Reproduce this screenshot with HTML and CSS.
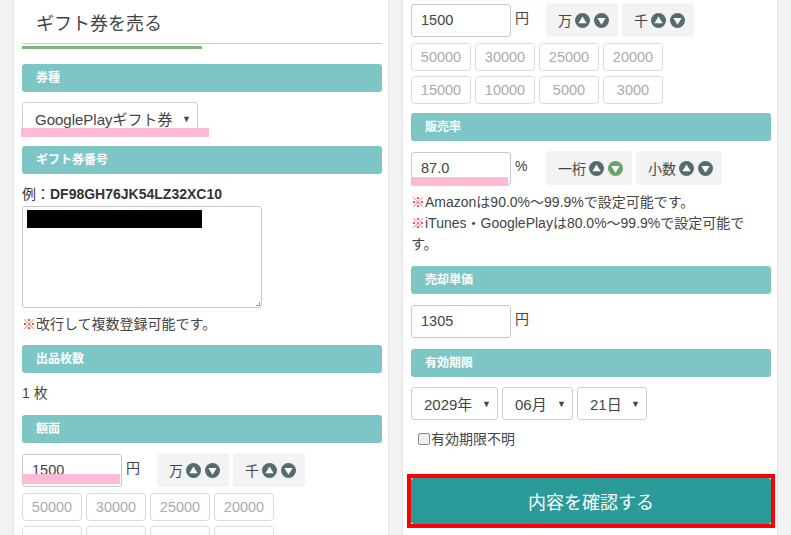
FILE: index.html
```html
<!DOCTYPE html>
<html lang="ja">
<head>
<meta charset="utf-8">
<title>ギフト券を売る</title>
<link rel="stylesheet" href="styles.css">
</head>
<body>
<div class="page">
  <section class="panel panel-left">
    <h1 class="title">ギフト券を売る</h1>
    <div class="title-bar"></div>

    <div class="head head-first">券種</div>
    <div class="mark mark-select">
      <div class="select select-type"><span>GooglePlayギフト券</span><span class="arrow">▼</span></div>
    </div>

    <div class="head head-gap">ギフト券番号</div>
    <p class="example">例：<b>DF98GH76JK54LZ32XC10</b></p>
    <div class="textarea"><div class="redact"></div><span class="grip"></span></div>
    <p class="note-left"><span class="red">※</span>改行して複数登録可能です。</p>

    <div class="head head-gap2">出品枚数</div>
    <p class="count">1 枚</p>

    <div class="head head-gap3">額面</div>
    <div class="input-row row-left">
      <div class="mark mark-input"><div class="input">1500</div></div>
      <span class="unit">円</span>
      <div class="spin">万<svg class="ic" viewBox="0 0 16 16"><circle cx="8" cy="8" r="8" fill="#546c70"/><polygon points="8,3.6 12.4,10.8 3.6,10.8" fill="#fff"/></svg><svg class="ic" viewBox="0 0 16 16"><circle cx="8" cy="8" r="8" fill="#546c70"/><polygon points="3.6,5.2 12.4,5.2 8,12.4" fill="#fff"/></svg></div>
      <div class="spin">千<svg class="ic" viewBox="0 0 16 16"><circle cx="8" cy="8" r="8" fill="#546c70"/><polygon points="8,3.6 12.4,10.8 3.6,10.8" fill="#fff"/></svg><svg class="ic" viewBox="0 0 16 16"><circle cx="8" cy="8" r="8" fill="#546c70"/><polygon points="3.6,5.2 12.4,5.2 8,12.4" fill="#fff"/></svg></div>
    </div>
    <div class="presets">
      <span class="preset">50000</span><span class="preset">30000</span><span class="preset">25000</span><span class="preset">20000</span>
      <span class="preset">15000</span><span class="preset">10000</span><span class="preset">5000</span><span class="preset">3000</span>
    </div>
  </section>

  <section class="panel panel-right">
    <div class="input-row row-top">
      <div class="input">1500</div>
      <span class="unit">円</span>
      <div class="spin">万<svg class="ic" viewBox="0 0 16 16"><circle cx="8" cy="8" r="8" fill="#546c70"/><polygon points="8,3.6 12.4,10.8 3.6,10.8" fill="#fff"/></svg><svg class="ic" viewBox="0 0 16 16"><circle cx="8" cy="8" r="8" fill="#546c70"/><polygon points="3.6,5.2 12.4,5.2 8,12.4" fill="#fff"/></svg></div>
      <div class="spin">千<svg class="ic" viewBox="0 0 16 16"><circle cx="8" cy="8" r="8" fill="#546c70"/><polygon points="8,3.6 12.4,10.8 3.6,10.8" fill="#fff"/></svg><svg class="ic" viewBox="0 0 16 16"><circle cx="8" cy="8" r="8" fill="#546c70"/><polygon points="3.6,5.2 12.4,5.2 8,12.4" fill="#fff"/></svg></div>
    </div>
    <div class="presets">
      <span class="preset">50000</span><span class="preset">30000</span><span class="preset">25000</span><span class="preset">20000</span>
      <span class="preset">15000</span><span class="preset">10000</span><span class="preset">5000</span><span class="preset">3000</span>
    </div>

    <div class="head head-r1">販売率</div>
    <div class="input-row row-rate">
      <div class="mark mark-rate"><div class="input">87.0</div></div>
      <span class="unit">%</span>
      <div class="spin">一桁<svg class="ic" viewBox="0 0 16 16"><circle cx="8" cy="8" r="8" fill="#546c70"/><polygon points="8,3.6 12.4,10.8 3.6,10.8" fill="#fff"/></svg><svg class="ic" viewBox="0 0 16 16"><circle cx="8" cy="8" r="8" fill="#6aa36c"/><polygon points="3.6,5.2 12.4,5.2 8,12.4" fill="#fff"/></svg></div>
      <div class="spin">小数<svg class="ic" viewBox="0 0 16 16"><circle cx="8" cy="8" r="8" fill="#546c70"/><polygon points="8,3.6 12.4,10.8 3.6,10.8" fill="#fff"/></svg><svg class="ic" viewBox="0 0 16 16"><circle cx="8" cy="8" r="8" fill="#546c70"/><polygon points="3.6,5.2 12.4,5.2 8,12.4" fill="#fff"/></svg></div>
    </div>
    <p class="notes"><span class="red">※</span>Amazonは90.0%～99.9%で設定可能です。<br><span class="red">※</span>iTunes・GooglePlayは80.0%～99.9%で設定可能で<br>す。</p>

    <div class="head head-r2">売却単価</div>
    <div class="input-row row-price">
      <div class="input">1305</div>
      <span class="unit">円</span>
    </div>

    <div class="head head-r3">有効期限</div>
    <div class="date-row">
      <div class="select select-year"><span>2029年</span><span class="arrow">▼</span></div>
      <div class="select select-month"><span>06月</span><span class="arrow">▼</span></div>
      <div class="select select-day"><span>21日</span><span class="arrow">▼</span></div>
    </div>
    <label class="check"><span class="box"></span>有効期限不明</label>

    <div class="confirm-frame">
      <button class="confirm" type="button">内容を確認する</button>
    </div>
  </section>
</div>
</body>
</html>
```
FILE: styles.css
```css
* { box-sizing: border-box; }

body {
  margin: 0;
  height: 535px;
  overflow: hidden;
  background: #f2f2f2;
  font-family: "Liberation Sans", "Noto Sans CJK JP", sans-serif;
  color: #333;
}

p { margin: 0; }

.page {
  display: flex;
  gap: 13px;
  padding-left: 13px;
  height: 535px;
}

.panel {
  width: 376px;
  height: 535px;
  overflow: hidden;
  background: #fff;
  border-left: 1px solid #e4e4e4;
  border-right: 1px solid #e4e4e4;
  padding: 0 6px 0 8px;
  flex: none;
}

.title {
  margin: 0;
  height: 44px;
  padding: 13px 0 0 14px;
  font-size: 18px;
  line-height: 22px;
  font-weight: normal;
  color: #444;
  border-bottom: 1px solid #cccccc;
}

.title-bar {
  width: 180px;
  height: 3px;
  margin-top: 2px;
  background: #7db87c;
}

.head {
  height: 28px;
  line-height: 28px;
  padding-left: 14px;
  border-radius: 3px;
  background: #7ec6c6;
  color: #fff;
  font-size: 12px;
  font-weight: bold;
}

.head-first { margin-top: 15px; }
.head-gap { margin-top: 11px; }
.head-gap2 { margin-top: 13px; }
.head-gap3 { margin-top: 14px; }

.mark { position: relative; width: max-content; }
.mark::after {
  content: "";
  position: absolute;
  background: rgba(255, 182, 212, 0.95);
}
.mark-select { margin-top: 10px; }
.mark-select::after { left: -1px; top: 26px; width: 188px; height: 9px; }
.mark-input::after { left: 0; top: 21px; width: 98px; height: 10px; }
.mark-rate::after { left: 0; top: 26px; width: 97px; height: 9px; }

.select {
  display: flex;
  align-items: center;
  justify-content: space-between;
  height: 33px;
  padding: 0 6px 0 12px;
  border: 1px solid #cfcfcf;
  border-radius: 3px;
  background: #fff;
  font-size: 15px;
  color: #444;
}
.select .arrow { font-size: 9px; color: #444; }
.select-type { width: 176px; }
.select-year { width: 87px; }
.select-month { width: 71px; }
.select-day { width: 70px; }

.example {
  margin-top: 12px;
  font-size: 14px;
  line-height: 16px;
}

.textarea {
  position: relative;
  margin-top: 4px;
  width: 240px;
  height: 102px;
  border: 1px solid #c8c8c8;
  border-radius: 3px;
  padding: 3px 0 0 4px;
}
.redact { width: 175px; height: 18px; background: #000; }
.grip {
  position: absolute;
  right: 1px;
  bottom: 1px;
  width: 4px;
  height: 4px;
  border-right: 1px solid #999;
  border-bottom: 1px solid #999;
}

.note-left {
  margin-top: 8px;
  font-size: 14px;
  line-height: 16px;
  color: #444;
}
.red { color: #ee3333; }

.count {
  margin-top: 12px;
  font-size: 14px;
  line-height: 16px;
  color: #444;
}

.input-row {
  display: flex;
  align-items: flex-start;
  height: 34px;
}
.row-left { margin-top: 10px; }
.row-top { margin-top: 3px; }
.row-rate { margin-top: 10px; }
.row-price { margin-top: 10px; }

.input {
  width: 100px;
  height: 33px;
  margin-top: 1px;
  padding-left: 9px;
  border: 1px solid #c8c8c8;
  border-radius: 3px;
  font-size: 14.5px;
  line-height: 31px;
  color: #444;
  background: transparent;
}

.unit {
  width: 31px;
  margin-left: 4px;
  padding-top: 7px;
  font-size: 14px;
  line-height: 16px;
  color: #444;
}

.spin {
  display: flex;
  align-items: center;
  height: 34px;
  margin-right: 4px;
  padding: 0 9px 0 12px;
  border-radius: 3px;
  background: #f3f3f3;
  font-size: 14px;
  color: #444;
}
.ic { width: 15px; height: 15px; margin-left: 3px; }
.ic + .ic { margin-left: 4px; }

.presets {
  display: grid;
  grid-template-columns: repeat(4, 60px);
  column-gap: 4px;
  row-gap: 5px;
  margin-top: 6px;
}
.preset {
  height: 28px;
  border: 1px solid #dcdcdc;
  border-radius: 4px;
  text-align: center;
  font-size: 14.5px;
  line-height: 26px;
  color: #aaa;
}

.head-r1 { margin-top: 9px; }
.head-r2 { margin-top: 11px; }
.head-r3 { margin-top: 11px; }

.notes {
  margin-top: 7px;
  font-size: 14px;
  line-height: 21px;
  color: #444;
  white-space: nowrap;
}

.date-row {
  display: flex;
  gap: 4px;
  margin-top: 10px;
}

.check {
  display: flex;
  align-items: center;
  margin: 11px 0 0 7px;
  font-size: 14px;
  line-height: 16px;
  color: #444;
}
.box {
  width: 12px;
  height: 12px;
  margin-right: 1px;
  border: 1px solid #888;
  border-radius: 2px;
  background: #eee;
}

.confirm-frame {
  width: 368px;
  margin: 27px 0 0 -4px;
  border: 4px solid #ff0000;
  background: #fff;
}

.confirm {
  display: block;
  width: 360px;
  height: 46px;
  border: none;
  border-radius: 3px;
  background: #2a9b99;
  color: #fff;
  font-family: "Liberation Sans", "Noto Sans CJK JP", sans-serif;
  font-size: 18px;
}
```
